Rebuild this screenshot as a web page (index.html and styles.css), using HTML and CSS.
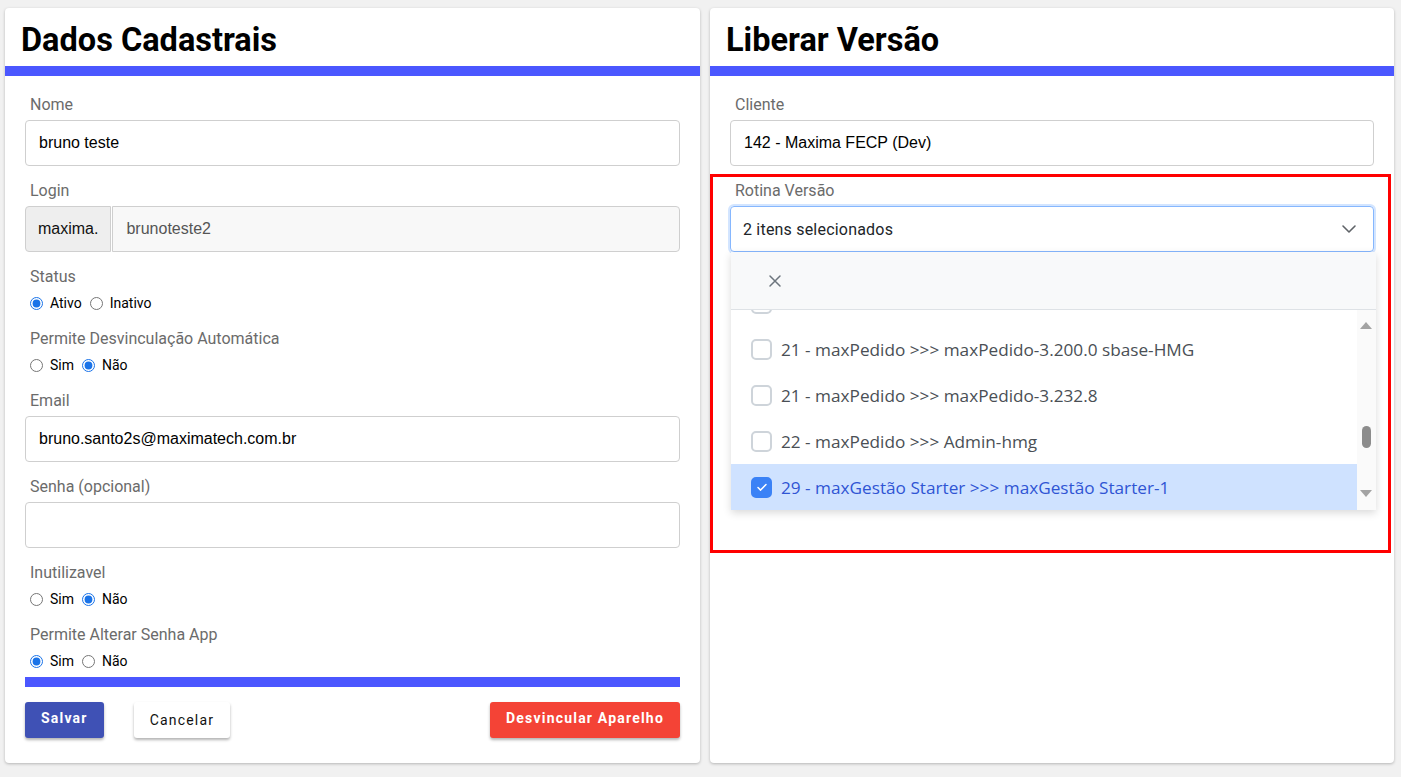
FILE: index.html
```html
<!DOCTYPE html>
<html lang="pt-BR">
<head>
    <meta charset="UTF-8">
    <meta name="viewport" content="width=device-width, initial-scale=1.0">
    <title>Dados Cadastrais</title>
    <link rel="stylesheet" href="styles.css">
</head>
<body>
    <div class="page">
        <div class="card card-left">
            <div class="card-header">
                <h1>Dados Cadastrais</h1>
            </div>
            <div class="card-body">
                <div class="form-group">
                    <label>Nome</label>
                    <input type="text" class="field" value="bruno teste">
                </div>

                <div class="form-group">
                    <label>Login</label>
                    <div class="input-group">
                        <span class="prefix">maxima.</span>
                        <input type="text" class="field field-disabled" value="brunoteste2">
                    </div>
                </div>

                <div class="form-group">
                    <label>Status</label>
                    <div class="radios">
                        <label class="radio"><input type="radio" name="status" checked> Ativo</label>
                        <label class="radio"><input type="radio" name="status"> Inativo</label>
                    </div>
                </div>

                <div class="form-group">
                    <label>Permite Desvinculação Automática</label>
                    <div class="radios">
                        <label class="radio"><input type="radio" name="desv"> Sim</label>
                        <label class="radio"><input type="radio" name="desv" checked> Não</label>
                    </div>
                </div>

                <div class="form-group">
                    <label>Email</label>
                    <input type="text" class="field" value="bruno.santo2s@maximatech.com.br">
                </div>

                <div class="form-group">
                    <label>Senha (opcional)</label>
                    <input type="password" class="field">
                </div>

                <div class="form-group">
                    <label>Inutilizavel</label>
                    <div class="radios">
                        <label class="radio"><input type="radio" name="inut"> Sim</label>
                        <label class="radio"><input type="radio" name="inut" checked> Não</label>
                    </div>
                </div>

                <div class="form-group">
                    <label>Permite Alterar Senha App</label>
                    <div class="radios">
                        <label class="radio"><input type="radio" name="senha" checked> Sim</label>
                        <label class="radio"><input type="radio" name="senha"> Não</label>
                    </div>
                </div>

                <div class="divider"></div>

                <div class="actions">
                    <button class="btn btn-primary">Salvar</button>
                    <button class="btn btn-light">Cancelar</button>
                    <button class="btn btn-danger">Desvincular Aparelho</button>
                </div>
            </div>
        </div>

        <div class="card card-right">
            <div class="card-header">
                <h1>Liberar Versão</h1>
            </div>
            <div class="card-body">
                <div class="form-group">
                    <label>Cliente</label>
                    <input type="text" class="field" value="142 - Maxima FECP (Dev)">
                </div>

                <div class="form-group select-group">
                    <label>Rotina Versão</label>
                    <div class="select">
                        <span>2 itens selecionados</span>
                        <svg class="chevron" width="16" height="16" viewBox="0 0 16 16">
                            <path d="M2 5l6 6 6-6" fill="none" stroke="#5f6368" stroke-width="1.6" stroke-linecap="round" stroke-linejoin="round"/>
                        </svg>
                    </div>

                    <div class="dropdown">
                        <div class="dropdown-head">
                            <svg width="14" height="14" viewBox="0 0 14 14">
                                <path d="M2 2l10 10M12 2L2 12" stroke="#6c757d" stroke-width="1.5" stroke-linecap="round"/>
                            </svg>
                        </div>
                        <div class="dropdown-list">
                            <div class="options">
                                <div class="option"><span class="check"></span></div>
                                <div class="option"><span class="check"></span><span>21 - maxPedido &gt;&gt;&gt; maxPedido-3.200.0 sbase-HMG</span></div>
                                <div class="option"><span class="check"></span><span>21 - maxPedido &gt;&gt;&gt; maxPedido-3.232.8</span></div>
                                <div class="option"><span class="check"></span><span>22 - maxPedido &gt;&gt;&gt; Admin-hmg</span></div>
                                <div class="option selected">
                                    <span class="check">
                                        <svg width="14" height="14" viewBox="0 0 14 14"><path d="M3 7.5l2.6 2.6L11 4.5" fill="none" stroke="#fff" stroke-width="1.5" stroke-linecap="round" stroke-linejoin="round"/></svg>
                                    </span>
                                    <span>29 - maxGestão Starter &gt;&gt;&gt; maxGestão Starter-1</span>
                                </div>
                            </div>
                            <div class="scrollbar">
                                <span class="arrow up"></span>
                                <span class="thumb"></span>
                                <span class="arrow down"></span>
                            </div>
                        </div>
                    </div>
                </div>

                <div class="highlight"></div>
            </div>
        </div>
    </div>
</body>
</html>
```

FILE: styles.css
```css
* {
    margin: 0;
    padding: 0;
    box-sizing: border-box;
}

body {
    background-color: #f1f1f1;
    font-family: Roboto, 'Noto Sans', sans-serif;
    color: #212529;
}

.page {
    display: flex;
    gap: 10px;
    padding: 8px 7px 14px 5px;
}

.card {
    background-color: #ffffff;
    border-radius: 4px;
    box-shadow: 0 1px 3px rgba(0, 0, 0, 0.25);
    height: 755px;
    position: relative;
}

.card-left {
    width: 695px;
}

.card-right {
    width: 684px;
}

.card-header {
    height: 68px;
    padding: 13px 16px 0;
    border-bottom: 10px solid #4b57ff;
}

.card-header h1 {
    font-size: 32.5px;
    font-weight: 700;
    line-height: 38px;
    color: #000000;
}

.card-body {
    padding: 18px 20px 0;
    position: relative;
}

.form-group {
    margin-bottom: 14px;
}

.form-group > label {
    display: block;
    position: relative;
    top: 1px;
    font-size: 16px;
    line-height: 20px;
    color: #6b6b6b;
    padding-left: 5px;
    margin-bottom: 6px;
}

.field {
    display: block;
    width: 100%;
    height: 46px;
    border: 1px solid #cfcfcf;
    border-radius: 4px;
    padding: 0 13px;
    font-family: 'Liberation Sans', Arial, sans-serif;
    font-size: 16px;
    color: #000000;
    background-color: #ffffff;
    outline: none;
}

.field-disabled {
    background-color: #f8f8f8;
    color: #555555;
}

.input-group {
    display: flex;
}

.input-group .prefix {
    display: flex;
    align-items: center;
    height: 46px;
    padding: 0 12px;
    background-color: #eeeeee;
    border: 1px solid #cfcfcf;
    border-radius: 4px 0 0 4px;
    font-family: 'Liberation Sans', Arial, sans-serif;
    font-size: 16px;
    color: #111111;
}

.input-group .field {
    border-radius: 0 4px 4px 0;
    margin-left: 1px;
}

.radios {
    display: flex;
    gap: 8px;
    height: 22px;
    align-items: center;
    padding-left: 5px;
}

.radio {
    display: flex;
    align-items: center;
    gap: 7px;
    font-size: 14px;
    color: #000000;
}

.radio input {
    width: 13px;
    height: 13px;
    margin: 0;
    accent-color: #1a73e8;
}

.divider {
    height: 10px;
    background-color: #4b57ff;
    margin-top: -9px;
}

.actions {
    display: flex;
    gap: 30px;
    margin-top: 15px;
}

.btn {
    height: 36px;
    border: none;
    border-radius: 3px;
    font-family: Roboto, sans-serif;
    font-size: 14px;
    letter-spacing: 1.2px;
    padding: 0 16px 4px;
    box-shadow: 0 2px 3px rgba(0, 0, 0, 0.3);
    cursor: pointer;
}

.btn-primary {
    background-color: #3f51b5;
    color: #ffffff;
    font-weight: 700;
}

.btn-light {
    background-color: #ffffff;
    color: #111111;
    padding-bottom: 0;
}

.btn-danger {
    background-color: #f44336;
    color: #ffffff;
    font-weight: 700;
    margin-left: auto;
}

/* select aberto */
.select-group {
    position: relative;
}

.select {
    height: 46px;
    border: 1px solid #86b7fe;
    border-radius: 4px;
    box-shadow: 0 0 0 2px rgba(13, 110, 253, 0.18);
    display: flex;
    align-items: center;
    justify-content: space-between;
    padding: 0 16px 0 12px;
    font-size: 16px;
    letter-spacing: 0.2px;
    color: #212529;
}

.dropdown {
    position: absolute;
    top: 72px;
    left: 1px;
    width: 645px;
    background-color: #ffffff;
    box-shadow: 0 3px 8px rgba(0, 0, 0, 0.15);
    z-index: 2;
}

.dropdown-head {
    height: 58px;
    background-color: #f8f9fa;
    border-bottom: 1px solid #dee2e6;
    display: flex;
    align-items: center;
    padding-left: 37px;
}

.dropdown-list {
    display: flex;
    height: 200px;
    overflow: hidden;
}

.options {
    flex: 1;
    margin-top: -30px;
}

.option {
    height: 46px;
    display: flex;
    align-items: center;
    gap: 9px;
    padding-left: 20px;
    font-family: 'Open Sans', sans-serif;
    font-size: 17.2px;
    color: #4a4f55;
}

.check {
    width: 21px;
    height: 21px;
    border: 2px solid #ced4da;
    border-radius: 5px;
    display: flex;
    align-items: center;
    justify-content: center;
    flex-shrink: 0;
}

.option.selected {
    background-color: #cfe2ff;
    color: #2f55d4;
}

.option.selected .check {
    background-color: #3b82f6;
    border-color: #3b82f6;
}

.scrollbar {
    width: 19px;
    background-color: #fafafa;
    position: relative;
}

.arrow {
    position: absolute;
    left: 3px;
    width: 0;
    height: 0;
    border-left: 6px solid transparent;
    border-right: 6px solid transparent;
}

.arrow.up {
    top: 12px;
    border-bottom: 7px solid #a3a3a3;
}

.arrow.down {
    bottom: 13px;
    border-top: 7px solid #a3a3a3;
}

.thumb {
    position: absolute;
    left: 5px;
    top: 116px;
    width: 9px;
    height: 22px;
    border-radius: 5px;
    background-color: #8c8c8c;
}

.highlight {
    position: absolute;
    top: 98px;
    left: 0;
    width: 681px;
    height: 379px;
    border: 3px solid #ff0000;
    pointer-events: none;
}
```
